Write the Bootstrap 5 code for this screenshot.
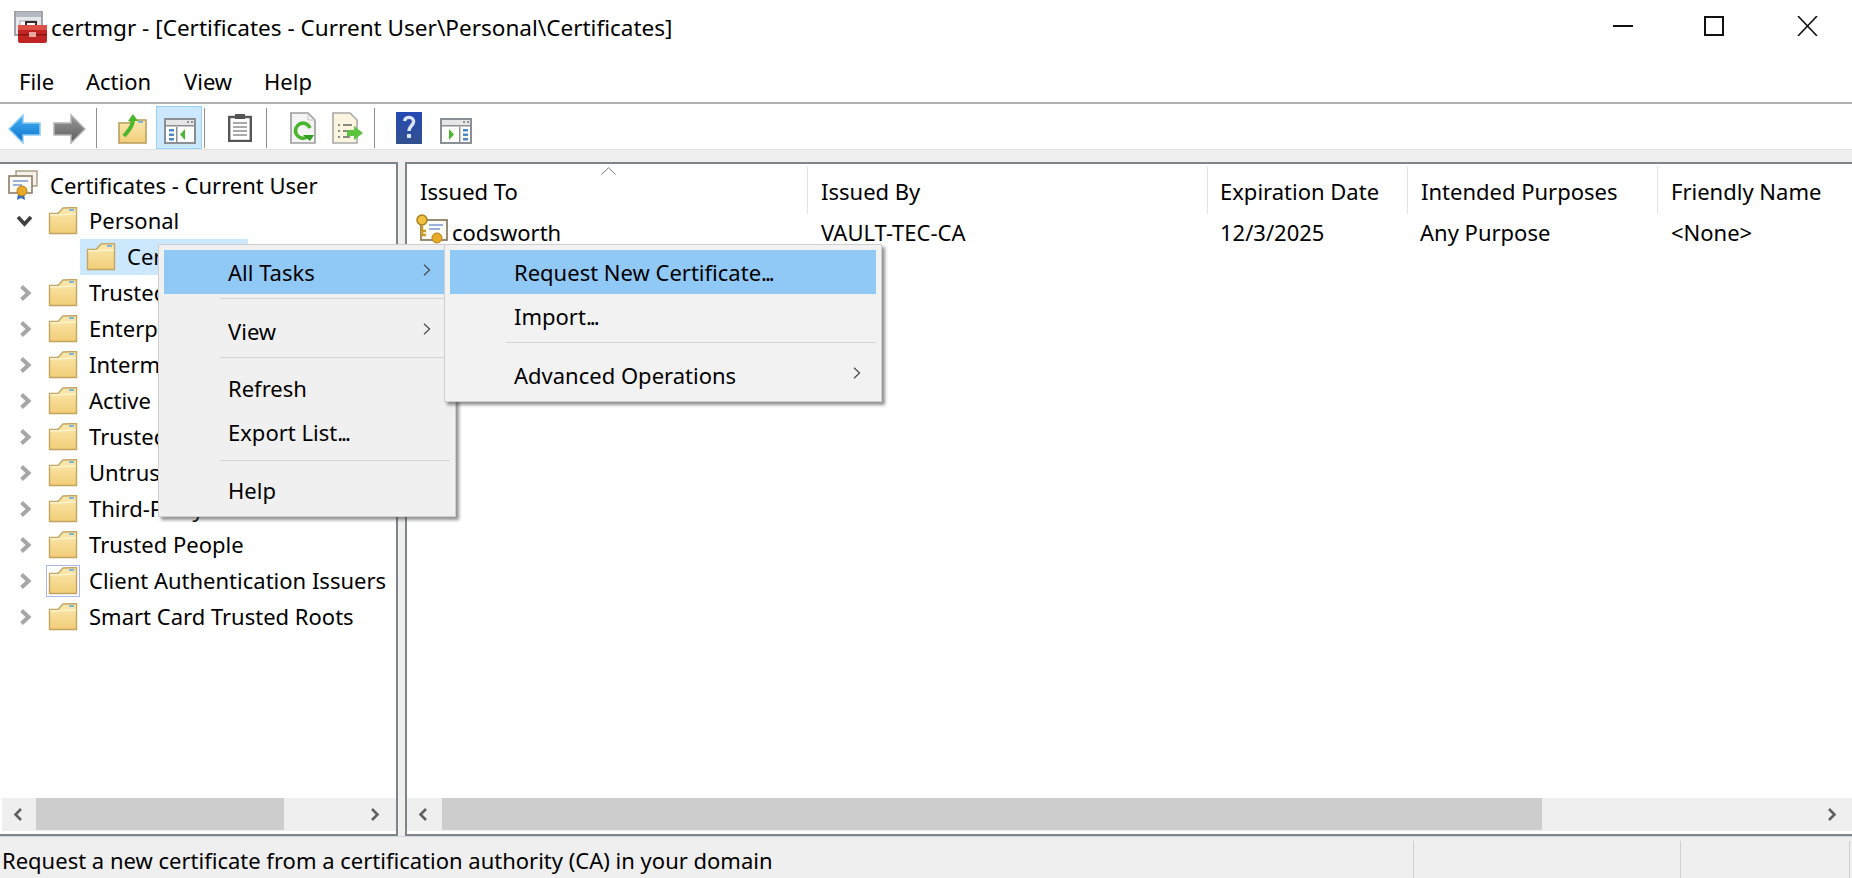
<!DOCTYPE html>
<html lang="en">
<head>
<meta charset="utf-8">
<title>certmgr</title>
<link rel="stylesheet" href="https://cdn.jsdelivr.net/npm/bootstrap@5.3.0/dist/css/bootstrap.min.css">
<style>
html,body{height:878px;overflow:hidden}
body{font-family:"Noto Sans","Open Sans",sans-serif;font-size:22px;color:#000;background:#fff;line-height:30px}
svg{flex:none}
.app-win{width:1852px;height:878px;position:relative}
.title-row{height:58px;padding-left:14px}
.title-row .app-ic{margin-top:-4px}
.title-row .ttl{margin-left:4px;margin-top:-2px;font-size:22.55px}
.win-btn{position:absolute;top:16px}
.menu-row{height:46px;border-bottom:2px solid #aeb0b3}
.menu-row span{position:absolute;top:66px}
.tool-row{height:46px;border-bottom:1px solid #e3e3e3}
.tool-row svg{position:absolute}
.tool-sep{position:absolute;top:108px;width:1px;height:40px;background:#8e8e8e}
.tool-on{position:absolute;left:156px;top:106px;width:46px;height:43px;background:#cce8ff;border:1px solid #99d1ff}
.gap-strip{height:12px;background:#efefef}
.panes{height:674px;background:#efefef}
.pane-l{width:398px;background:#fff;border-top:2px solid #7f838a;border-right:2px solid #7f838a;border-bottom:2px solid #7f838a}
.pane-r{margin-left:7px;width:1447px;background:#fff;border-top:2px solid #7f838a;border-left:2px solid #7f838a;border-bottom:2px solid #7f838a}
.tree-box{padding-top:3px;overflow:hidden;width:396px}
.tree-row{height:36px;white-space:nowrap}
.tree-row .cv{width:48px;flex:none;padding-left:19px}
.tree-row .open-cv{padding-left:16px}
.tree-row .lab{margin-left:11px;margin-top:-2px}
.root-row{padding-left:8px}
.root-row .lab{margin-left:12px;margin-top:0}
.sel-wrap{margin-left:80px;width:168px;height:36px;background:#cce8ff;padding-left:6px}
.sel-wrap .lab{margin-left:11px}
.focus-ic{outline:1px solid #a9b8e8;outline-offset:1px}
.hscroll{height:33px;margin:auto 0 3px;background:#efefef;position:relative}
.pane-l .hscroll{margin-left:2px;margin-right:0}
.thumb{position:absolute;top:0;height:32px;background:#cdcdcd}
.thumb-a{left:34px;width:248px}
.thumb-b{left:35px;width:1100px}
.sc-arrow{position:absolute;top:10px}
.hdr-row{height:50px;padding-top:2px}
.hdr-cell{height:48px;padding-left:13px;border-left:1px solid #e3e3e3;line-height:50px}
.hdr-cell:first-child{border-left:0}
.col-a{width:400px;flex:none;padding-left:13px}
.col-b{width:400px;flex:none;padding-left:13px}
.col-c{width:200px;flex:none;padding-left:12px}
.col-d{width:250px;flex:none;padding-left:13px}
.col-e{flex:1 0 0;padding-left:13px}
.list-row .col-b{padding-left:14px}
.list-row .col-c{padding-left:13px}
.list-row .col-d{padding-left:13px}
.list-row .col-e{padding-left:14px}
.sort-up{position:absolute;left:601px;top:167px}
.list-row{height:36px;line-height:36px}
.list-row .col-a{padding-left:9px}
.list-row .col-a svg{margin-right:4px;vertical-align:top;margin-top:0}
.status-row{height:42px;background:#efefef;border-top:1px solid #d4d4d4;padding-left:2px;position:relative;line-height:46px}
.stat-sep{position:absolute;top:4px;bottom:0;width:1px;background:#d0d0d0}
.ctx{position:absolute;background:#f0f0f0;border:1px solid #cfcfcf;box-shadow:3px 3px 3px rgba(60,60,60,.55);padding:5px 5px 2px}
.ctx-main{left:158px;top:244px;width:298px;height:273px}
.ctx-sub{left:444px;top:244px;width:438px;height:158px;background:#f2f2f2;z-index:2}
.ctx-it{height:44px;padding-left:64px;line-height:44px;position:relative}
.ctx-it.low{line-height:40px}
.ctx-it.lower{line-height:38px}
.ctx-sub .ctx-it{padding-left:64px}
.ctx-it.hot{background:#90c8f6}
.ctx-it svg{position:absolute;top:14px}
.ctx-main .ctx-it{margin-right:6px}
.ctx-line{height:15px;padding-top:4px;margin-left:56px}
.ctx-line i{display:block;height:1px;background:#d4d4d4}
.dots{letter-spacing:-2px}
</style>
</head>
<body>
<svg width="0" height="0" class="position-absolute">
<defs>
<linearGradient id="gf" x1="0" y1="0" x2="0" y2="1"><stop offset="0" stop-color="#fbeab0"/><stop offset="1" stop-color="#f1cd78"/></linearGradient>
<linearGradient id="gb" x1="0" y1="0" x2="0" y2="1"><stop offset="0" stop-color="#49b3f2"/><stop offset="1" stop-color="#0b6fcc"/></linearGradient>
<linearGradient id="gg" x1="0" y1="0" x2="0" y2="1"><stop offset="0" stop-color="#9a9a9a"/><stop offset="1" stop-color="#5c5c5c"/></linearGradient>
<linearGradient id="gh" x1="0" y1="0" x2="0" y2="1"><stop offset="0" stop-color="#2549b4"/><stop offset="1" stop-color="#33518f"/></linearGradient>
<symbol id="folder" viewBox="0 0 30 28">
<path d="M1.500 6.500 L10 6.500 L15 1 L28.500 .5 L28.500 26.500 L1.500 26.500 Z" fill="url(#gf)" stroke="#c4a560" stroke-width="1.400"/>
<rect x="21" y="2" width="5" height="2" fill="#7db7e0"/>
<path d="M2 8 L28 7" stroke="#fdf3cf" stroke-width="1.400"/>
</symbol>
<symbol id="chev-r" viewBox="0 0 13 16"><path d="M2.500 1.500 L9.500 8 L2.500 14.500" fill="none" stroke="#a6a6a6" stroke-width="4"/></symbol>
<symbol id="mini-r" viewBox="0 0 8 12"><path d="M1 .8 L6.600 6 L1 11.200" fill="none" stroke="#4a4a4a" stroke-width="1.200"/></symbol>
<symbol id="wnd" viewBox="0 0 32 26">
<rect x="1" y="1" width="30" height="24" fill="#fff" stroke="#8a8f96" stroke-width="2"/>
<rect x="2" y="2" width="28" height="5" fill="#e6e6e6"/><rect x="2" y="7" width="28" height="1.500" fill="#8a8f96"/>
<rect x="23" y="3" width="2" height="2" fill="#8a8f96"/><rect x="27" y="3" width="2" height="2" fill="#8a8f96"/>
</symbol>
</defs>
</svg>

<div class="app-win d-flex flex-column">
  <div class="title-row d-flex align-items-center">
    <svg class="app-ic" width="33" height="32" viewBox="0 0 33 32">
      <rect x="1" y="0" width="27" height="24" fill="#e4e6ea" stroke="#8b8f98" stroke-width="1.600"/>
      <rect x="2" y="1" width="25" height="5" fill="#b4b8c0"/>
      <rect x="6" y="10" width="16" height="7" fill="#fff" stroke="#a4a8b0"/>
      <path d="M12 15 V11 H22 V15" fill="none" stroke="#3c2a2a" stroke-width="2"/>
      <rect x="4" y="14" width="29" height="18" rx="2" fill="#c02423"/>
      <rect x="4" y="14" width="29" height="5" fill="#dd5048"/>
      <rect x="4" y="23" width="29" height="1.500" fill="#8a1414"/>
      <rect x="15" y="21" width="7" height="5" fill="#e8a8a0"/>
    </svg>
    <span class="ttl">certmgr - [Certificates - Current User\Personal\Certificates]</span>
    <svg class="win-btn" style="left:1613px" width="20" height="20" viewBox="0 0 20 20"><rect x="0" y="9" width="20" height="2" fill="#111"/></svg>
    <svg class="win-btn" style="left:1704px" width="20" height="20" viewBox="0 0 20 20"><rect x="1" y="1" width="18" height="18" fill="none" stroke="#111" stroke-width="2"/></svg>
    <svg class="win-btn" style="left:1797px" width="21" height="20" viewBox="0 0 21 20"><path d="M1 0 L20 20 M20 0 L1 20" stroke="#111" stroke-width="1.600"/></svg>
  </div>
  <div class="menu-row">
    <span style="left:19px">File</span><span style="left:86px">Action</span><span style="left:184px">View</span><span style="left:264px">Help</span>
  </div>
  <div class="tool-row">
    <svg style="left:8px;top:114px" width="33" height="30" viewBox="0 0 33 30"><path d="M15 1 L1 15 L15 29 V21 H32 V9 H15 Z" fill="url(#gb)" stroke="#8fcdf5" stroke-width="1.500"/></svg>
    <svg style="left:53px;top:114px" width="33" height="30" viewBox="0 0 33 30"><path d="M18 1 L32 15 L18 29 V21 H1 V9 H18 Z" fill="url(#gg)" stroke="#b4b4b4" stroke-width="1.500"/></svg>
    <div class="tool-sep" style="left:96px"></div>
    <svg style="left:118px;top:114px" width="29" height="30" viewBox="0 0 29 30"><path d="M1 9 H11 L14 6 H28 V29 H1 Z" fill="url(#gf)" stroke="#b89a58" stroke-width="1.500"/><rect x="20" y="7" width="5" height="2" fill="#7db7e0"/><path d="M6 22 C10 17 14 14 15 7" fill="none" stroke="#4bb52e" stroke-width="4"/><path d="M10 7 L15 0 L20 7 Z" fill="#4bb52e"/></svg>
    <div class="tool-on"></div>
    <svg style="left:164px;top:118px" width="32" height="26"><use href="#wnd"/><rect x="12" y="9" width="1.500" height="15" fill="#8a8f96"/><rect x="5" y="11" width="5" height="2.500" fill="#4f86c6"/><rect x="5" y="15.500" width="5" height="2.500" fill="#4f86c6"/><rect x="5" y="20" width="5" height="2.500" fill="#4f86c6"/><path d="M21 11 L16 16.500 L21 22 Z" fill="#4bb52e"/></svg>
    <div class="tool-sep" style="left:204px"></div>
    <svg style="left:228px;top:114px" width="24" height="28" viewBox="0 0 24 28"><rect x="1.200" y="3" width="21.600" height="24" fill="#fff" stroke="#555" stroke-width="2.400"/><rect x="7" y="0" width="10" height="5" fill="#555"/><path d="M5 9 H19 M5 13 H19 M5 17 H19 M5 21 H19" stroke="#aaa" stroke-width="2"/></svg>
    <div class="tool-sep" style="left:266px"></div>
    <svg style="left:290px;top:112px" width="26" height="32" viewBox="0 0 26 32"><path d="M1 1 H18 L25 8 V31 H1 Z" fill="#f4f4f4" stroke="#9c9c9c" stroke-width="1.600"/><path d="M18 1 V8 H25" fill="none" stroke="#c4c4c4"/><path d="M17 25 A7.500 7.500 0 1 1 20 16" fill="none" stroke="#49b52c" stroke-width="3.600"/><path d="M13 23 H24 L20 29 Z" fill="#2f9c22"/></svg>
    <svg style="left:332px;top:112px" width="32" height="32" viewBox="0 0 32 32"><path d="M1 1 H18 L25 8 V31 H1 Z" fill="#fbf5df" stroke="#a8a8a8" stroke-width="1.600"/><path d="M6 13 H8 M11 13 H20 M6 19 H8 M11 19 H18 M6 25 H8 M11 25 H18" stroke="#666" stroke-width="1.600"/><path d="M22 14 L31 21 L22 28 V24 H15 V18 H22 Z" fill="#5cc43e"/></svg>
    <div class="tool-sep" style="left:374px"></div>
    <svg style="left:396px;top:112px" width="26" height="32" viewBox="0 0 26 32"><rect width="26" height="32" fill="url(#gh)"/><path d="M8.500 9 C9 4 18 4 17.500 10 C17 14 13 14 13 19" fill="none" stroke="#dfe5f8" stroke-width="3.400"/><rect x="11" y="22" width="4" height="4" fill="#dfe5f8"/></svg>
    <svg style="left:440px;top:118px" width="32" height="26"><use href="#wnd"/><rect x="19" y="9" width="1.500" height="15" fill="#8a8f96"/><rect x="23" y="11" width="5" height="2.500" fill="#4f86c6"/><rect x="23" y="15.500" width="5" height="2.500" fill="#4f86c6"/><rect x="23" y="20" width="5" height="2.500" fill="#4f86c6"/><path d="M9 11 L14 16.500 L9 22 Z" fill="#4bb52e"/></svg>
  </div>
  <div class="gap-strip"></div>
  <div class="panes d-flex">
    <div class="pane-l d-flex flex-column">
      <div class="tree-box">
        <div class="tree-row root-row d-flex align-items-center">
          <svg width="30" height="30" viewBox="0 0 30 30"><rect x="8" y="1" width="21" height="15" fill="#f4f1e8" stroke="#a79a82" stroke-width="1.400"/><rect x="1" y="6" width="23" height="17" fill="#fbfaf5" stroke="#8d7f68" stroke-width="1.600"/><path d="M5 11 H20 M5 15 H14" stroke="#7b9ad0" stroke-width="1.500"/><path d="M10 24 L9 30 L13 28 L17 30 L16 24 Z" fill="#2e6fc0"/><circle cx="14" cy="21" r="5" fill="#e8a92a" stroke="#b97f14"/></svg>
          <span class="lab">Certificates - Current User</span>
        </div>
        <div class="tree-row d-flex align-items-center">
          <span class="cv open-cv d-flex"><svg width="17" height="12" viewBox="0 0 17 12"><path d="M2 2 L8.500 9 L15 2" fill="none" stroke="#404040" stroke-width="3.600"/></svg></span>
          <svg width="30" height="28"><use href="#folder"/></svg><span class="lab">Personal</span>
        </div>
        <div class="tree-row d-flex">
          <div class="sel-wrap d-flex align-items-center"><svg width="30" height="28"><use href="#folder"/></svg><span class="lab">Certificates</span></div>
        </div>
        <div class="tree-row d-flex align-items-center"><span class="cv d-flex"><svg width="13" height="16"><use href="#chev-r"/></svg></span><svg width="30" height="28"><use href="#folder"/></svg><span class="lab">Trusted Root Certification Authorities</span></div>
        <div class="tree-row d-flex align-items-center"><span class="cv d-flex"><svg width="13" height="16"><use href="#chev-r"/></svg></span><svg width="30" height="28"><use href="#folder"/></svg><span class="lab">Enterprise Trust</span></div>
        <div class="tree-row d-flex align-items-center"><span class="cv d-flex"><svg width="13" height="16"><use href="#chev-r"/></svg></span><svg width="30" height="28"><use href="#folder"/></svg><span class="lab">Intermediate Certification Authorities</span></div>
        <div class="tree-row d-flex align-items-center"><span class="cv d-flex"><svg width="13" height="16"><use href="#chev-r"/></svg></span><svg width="30" height="28"><use href="#folder"/></svg><span class="lab">Active Directory User Object</span></div>
        <div class="tree-row d-flex align-items-center"><span class="cv d-flex"><svg width="13" height="16"><use href="#chev-r"/></svg></span><svg width="30" height="28"><use href="#folder"/></svg><span class="lab">Trusted Publishers</span></div>
        <div class="tree-row d-flex align-items-center"><span class="cv d-flex"><svg width="13" height="16"><use href="#chev-r"/></svg></span><svg width="30" height="28"><use href="#folder"/></svg><span class="lab">Untrusted Certificates</span></div>
        <div class="tree-row d-flex align-items-center"><span class="cv d-flex"><svg width="13" height="16"><use href="#chev-r"/></svg></span><svg width="30" height="28"><use href="#folder"/></svg><span class="lab">Third-Party Root Certification Authorities</span></div>
        <div class="tree-row d-flex align-items-center"><span class="cv d-flex"><svg width="13" height="16"><use href="#chev-r"/></svg></span><svg width="30" height="28"><use href="#folder"/></svg><span class="lab">Trusted People</span></div>
        <div class="tree-row d-flex align-items-center"><span class="cv d-flex"><svg width="13" height="16"><use href="#chev-r"/></svg></span><svg class="focus-ic" width="30" height="28"><use href="#folder"/></svg><span class="lab">Client Authentication Issuers</span></div>
        <div class="tree-row d-flex align-items-center"><span class="cv d-flex"><svg width="13" height="16"><use href="#chev-r"/></svg></span><svg width="30" height="28"><use href="#folder"/></svg><span class="lab">Smart Card Trusted Roots</span></div>
      </div>
      <div class="hscroll">
        <div class="thumb thumb-a"></div>
        <svg class="sc-arrow" style="left:11px" width="10" height="13" viewBox="0 0 10 13"><path d="M8 1 L2.500 6.500 L8 12" fill="none" stroke="#606060" stroke-width="2.600"/></svg>
        <svg class="sc-arrow" style="left:368px" width="10" height="13" viewBox="0 0 10 13"><path d="M2 1 L7.500 6.500 L2 12" fill="none" stroke="#606060" stroke-width="2.600"/></svg>
      </div>
    </div>
    <div class="pane-r d-flex flex-column">
      <div class="hdr-row d-flex">
        <div class="hdr-cell col-a">Issued To</div>
        <div class="hdr-cell col-b">Issued By</div>
        <div class="hdr-cell col-c">Expiration Date</div>
        <div class="hdr-cell col-d">Intended Purposes</div>
        <div class="hdr-cell col-e">Friendly Name</div>
      </div>
      <div class="list-row d-flex">
        <div class="col-a"><svg width="32" height="30" viewBox="0 0 32 30"><rect x="5" y="6" width="26" height="20" fill="#fbfaf5" stroke="#8d7f68" stroke-width="1.800"/><path d="M13 11 H27 M13 15 H24" stroke="#7b9ad0" stroke-width="1.500"/><circle cx="21" cy="24" r="5" fill="#e8a92a" stroke="#b97f14"/><circle cx="6" cy="6" r="5" fill="#f0c040" stroke="#a8801c" stroke-width="1.500"/><path d="M6 11 V22 M6 17 H10 M6 21 H10" stroke="#c89a24" stroke-width="2.400"/></svg>codsworth</div>
        <div class="col-b">VAULT-TEC-CA</div>
        <div class="col-c">12/3/2025</div>
        <div class="col-d">Any Purpose</div>
        <div class="col-e">&lt;None&gt;</div>
      </div>
      <div class="hscroll">
        <div class="thumb thumb-b"></div>
        <svg class="sc-arrow" style="left:11px" width="10" height="13" viewBox="0 0 10 13"><path d="M8 1 L2.500 6.500 L8 12" fill="none" stroke="#606060" stroke-width="2.600"/></svg>
        <svg class="sc-arrow" style="left:1420px" width="10" height="13" viewBox="0 0 10 13"><path d="M2 1 L7.500 6.500 L2 12" fill="none" stroke="#606060" stroke-width="2.600"/></svg>
      </div>
    </div>
  </div>
  <div class="status-row">Request a new certificate from a certification authority (CA) in your domain
    <span class="stat-sep" style="left:1413px"></span><span class="stat-sep" style="left:1680px"></span><span class="stat-sep" style="left:1849px"></span>
  </div>

  <svg class="sort-up" width="15" height="8" viewBox="0 0 15 8"><path d="M.5 7.500 L7.500 .8 L14.500 7.500" fill="none" stroke="#7a7a7a" stroke-width="1"/></svg>

  <div class="ctx ctx-main">
    <div class="ctx-it hot">All Tasks<svg style="left:259px" width="8" height="12"><use href="#mini-r"/></svg></div>
    <div class="ctx-line"><i></i></div>
    <div class="ctx-it">View<svg style="left:259px" width="8" height="12"><use href="#mini-r"/></svg></div>
    <div class="ctx-line"><i></i></div>
    <div class="ctx-it low">Refresh</div>
    <div class="ctx-it low">Export List<span class="dots">...</span></div>
    <div class="ctx-line"><i></i></div>
    <div class="ctx-it lower">Help</div>
  </div>
  <div class="ctx ctx-sub">
    <div class="ctx-it hot">Request New Certificate<span class="dots">...</span></div>
    <div class="ctx-it">Import<span class="dots">...</span></div>
    <div class="ctx-line"><i></i></div>
    <div class="ctx-it">Advanced Operations<svg style="left:403px" width="8" height="12"><use href="#mini-r"/></svg></div>
  </div>
</div>
</body>
</html>
